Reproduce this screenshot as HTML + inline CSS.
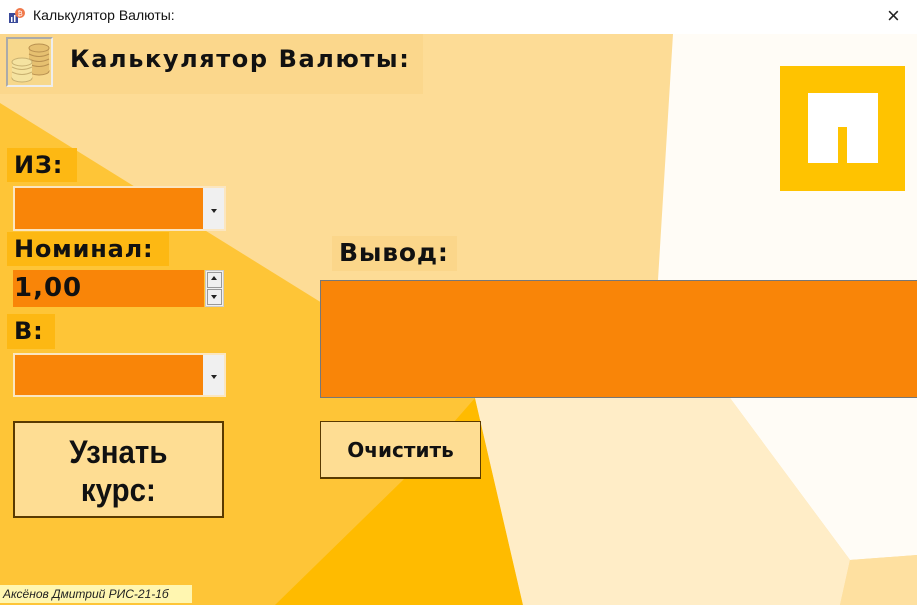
<!DOCTYPE html>
<html><head><meta charset="utf-8"><style>
*{margin:0;padding:0;box-sizing:border-box}
body{width:917px;height:605px;overflow:hidden;position:relative;background:#fff;font-family:"DejaVu Sans","Liberation Sans",sans-serif}
.a{position:absolute}
.lbl{position:absolute;font-weight:bold;color:#111;font-size:24px;line-height:34px;padding-left:7px;letter-spacing:0.8px}
.cb{position:absolute;background:#f98508;border:2px solid #fbe6c0}
.dd{position:absolute;right:0;top:0;bottom:0;width:21px;background:#f0f0f0}
.dd:after{content:"";position:absolute;left:8px;top:50%;border:3px solid transparent;border-top:4px solid #222}
</style></head><body>
<div class="a" style="left:0;top:0;width:917px;height:34px;background:#fff"></div>
<svg class="a" style="left:8px;top:7px" width="18" height="18" viewBox="0 0 18 18"><rect x="1" y="6" width="9" height="10" fill="#3a4a9a"/><rect x="3" y="10" width="1.5" height="5" fill="#fff"/><rect x="6" y="8" width="1.5" height="7" fill="#fff"/><circle cx="12" cy="6" r="5" fill="#f0784a"/><text x="9.5" y="9" font-size="7" fill="#fff" font-family="Liberation Sans">₿</text></svg>
<div class="a" style="left:33px;top:7px;font:14px 'Liberation Sans',sans-serif;color:#111">Калькулятор Валюты:</div>
<div class="a" style="left:887px;top:3px;font:22px 'Liberation Sans',sans-serif;color:#222">×</div>
<svg class="a" style="left:0;top:34px" width="917" height="571" viewBox="0 34 917 571">
<rect x="0" y="34" width="917" height="571" fill="#fddc96"/>
<polygon points="673,34 917,34 917,555 850,560 730,398 658,398 658,280" fill="#fffcf6"/>
<polygon points="0,103 475,398 523,605 0,605" fill="#fec537"/>
<polygon points="403,480 475,398 523,605 275,605" fill="#ffbb00"/>
<polygon points="475,398 730,398 850,560 840,605 523,605" fill="#ffedc7"/>
<polygon points="850,560 917,555 917,605 840,605" fill="#fee0a0"/>
</svg>
<div class="a" style="left:0;top:34px;width:423px;height:60px;background:#fbd78c"></div>
<div class="a" style="left:6px;top:37px;width:47px;height:50px;border:2px solid #aaa;border-right-color:#eee;border-bottom-color:#eee;background:#f7d88c"></div>
<svg class="a" style="left:9px;top:40px" width="42" height="44" viewBox="0 0 42 44"><g fill="#e6c070" stroke="#b89050" stroke-width="1"><ellipse cx="30" cy="31" rx="10" ry="4"/><rect x="20" y="8" width="20" height="23" stroke="none"/><ellipse cx="30" cy="8" rx="10" ry="4"/><path d="M20 14q10 5 20 0M20 19q10 5 20 0M20 24q10 5 20 0" fill="none"/></g><g fill="#f5e3a0" stroke="#c8b070"><rect x="3" y="22" width="20" height="16" stroke="none"/><ellipse cx="13" cy="38" rx="10" ry="4"/><rect x="3" y="22" width="20" height="16" stroke="none"/><ellipse cx="13" cy="22" rx="10" ry="4"/><path d="M3 27q10 5 20 0M3 32q10 5 20 0" fill="none"/></g></svg>
<div class="a" style="left:70px;top:45px;font-size:24px;font-weight:bold;color:#111;letter-spacing:1.6px">Калькулятор Валюты:</div>
<div class="lbl" style="left:7px;top:148px;width:70px;background:#fdb813">ИЗ:</div>
<div class="cb" style="left:13px;top:186px;width:213px;height:45px"><div class="dd"></div></div>
<div class="lbl" style="left:7px;top:232px;width:162px;background:#fdb813">Номинал:</div>
<div class="a" style="left:13px;top:270px;width:191px;height:37px;background:#f98508;font-size:26px;font-weight:bold;line-height:37px;color:#111;padding-left:1px;letter-spacing:1px">1,00</div>
<div class="a" style="left:205px;top:270px;width:19px;height:37px;background:#f0f0f0;border:1px solid #ccc"><div class="a" style="left:1px;top:1px;width:15px;height:16px;border:1px solid #999"></div><div class="a" style="left:1px;top:18px;width:15px;height:16px;border:1px solid #999"></div><div class="a" style="left:5px;top:5px;border:3px solid transparent;border-bottom:4px solid #222;border-top:0"></div><div class="a" style="left:5px;top:24px;border:3px solid transparent;border-top:4px solid #222;border-bottom:0"></div></div>
<div class="lbl" style="left:7px;top:314px;width:48px;height:35px;background:#fdb813">В:</div>
<div class="cb" style="left:13px;top:353px;width:213px;height:44px"><div class="dd"></div></div>
<div class="a" style="left:13px;top:421px;width:211px;height:97px;background:#fedd93;border:2px solid #5a3a00;font:bold 32px 'Liberation Sans',sans-serif;color:#111;text-align:center;line-height:38px;padding-top:10px"><span style="display:inline-block;transform:scaleX(0.92)">Узнать<br>курс:</span></div>
<div class="lbl" style="left:332px;top:236px;width:125px;height:35px;background:#fbd68a;font-size:25px">Вывод:</div>
<div class="a" style="left:320px;top:280px;width:597px;height:118px;background:#f98508;border:1px solid #777;border-right:0"></div>
<div class="a" style="left:320px;top:421px;width:161px;height:58px;background:#fedd93;border:1px solid #5a3a00;border-bottom-width:2px;font-size:20px;font-weight:bold;color:#111;text-align:center;line-height:56px">Очистить</div>
<div class="a" style="left:780px;top:66px;width:125px;height:125px;background:#ffc300"></div>
<div class="a" style="left:808px;top:93px;width:70px;height:70px;background:#fff"></div>
<div class="a" style="left:838px;top:127px;width:9px;height:36px;background:#ffc300"></div>
<div class="a" style="left:0;top:585px;width:192px;height:18px;background:#fff6b0;font:italic 12px 'Liberation Sans',sans-serif;color:#222;line-height:18px;padding-left:3px">Аксёнов Дмитрий РИС-21-1б</div>
</body></html>
